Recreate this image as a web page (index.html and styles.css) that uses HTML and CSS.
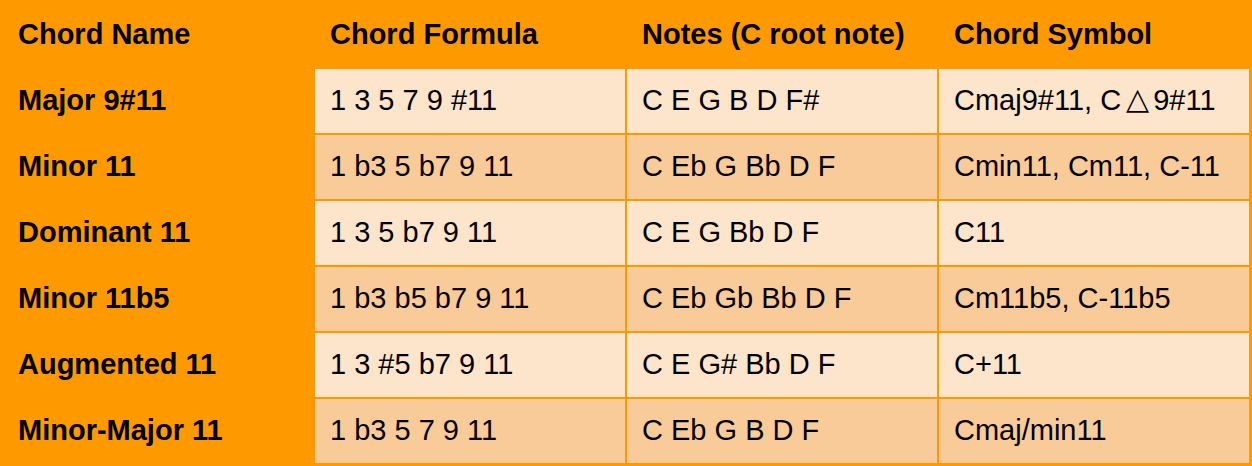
FILE: index.html
```html
<!DOCTYPE html>
<html>
<head>
<meta charset="utf-8">
<link rel="stylesheet" href="styles.css">
</head>
<body>
<div class="chord-table">
  <div class="cell head">Chord Name</div>
  <div class="cell head">Chord Formula</div>
  <div class="cell head">Notes (C root note)</div>
  <div class="cell head">Chord Symbol</div>

  <div class="cell name">Major 9#11</div>
  <div class="cell light">1 3 5 7 9 #11</div>
  <div class="cell light">C E G B D F#</div>
  <div class="cell light">Cmaj9#11, C<span class="tri">△</span>9#11</div>

  <div class="cell name">Minor 11</div>
  <div class="cell dark">1 b3 5 b7 9 11</div>
  <div class="cell dark">C Eb G Bb D F</div>
  <div class="cell dark">Cmin11, Cm11, C-11</div>

  <div class="cell name">Dominant 11</div>
  <div class="cell light">1 3 5 b7 9 11</div>
  <div class="cell light">C E G Bb D F</div>
  <div class="cell light">C11</div>

  <div class="cell name">Minor 11b5</div>
  <div class="cell dark">1 b3 b5 b7 9 11</div>
  <div class="cell dark">C Eb Gb Bb D F</div>
  <div class="cell dark">Cm11b5, C-11b5</div>

  <div class="cell name">Augmented 11</div>
  <div class="cell light">1 3 #5 b7 9 11</div>
  <div class="cell light">C E G# Bb D F</div>
  <div class="cell light">C+11</div>

  <div class="cell name">Minor-Major 11</div>
  <div class="cell dark">1 b3 5 7 9 11</div>
  <div class="cell dark">C Eb G B D F</div>
  <div class="cell dark">Cmaj/min11</div>
</div>
</body>
</html>
```

FILE: styles.css
```css
html, body {
  margin: 0;
  padding: 0;
  background: #ffffff;
}

.chord-table {
  width: 1252px;
  height: 466px;
  box-sizing: border-box;
  display: grid;
  grid-template-columns: 311px 310px 310px 310px;
  grid-template-rows: repeat(7, 64px);
  gap: 2px;
  padding: 3px 3px 3px 2px;
  background: #ff9900;
  font-family: "Liberation Sans", Arial, sans-serif;
  font-size: 29px;
  color: #000000;
}

.cell {
  display: flex;
  align-items: center;
  padding: 0 0 2px 15px;
  white-space: nowrap;
}

.head,
.name {
  font-weight: bold;
  padding-left: 16px;
}

.head + .head {
  padding-left: 15px;
}

.light {
  background: #fde5cb;
}

.dark {
  background: #f9cb98;
}

.tri {
  font-family: "DejaVu Sans", sans-serif;
  font-size: 30px;
  line-height: 0;
  position: relative;
  top: -1px;
  margin: 0 4px 0 5px;
}
```
